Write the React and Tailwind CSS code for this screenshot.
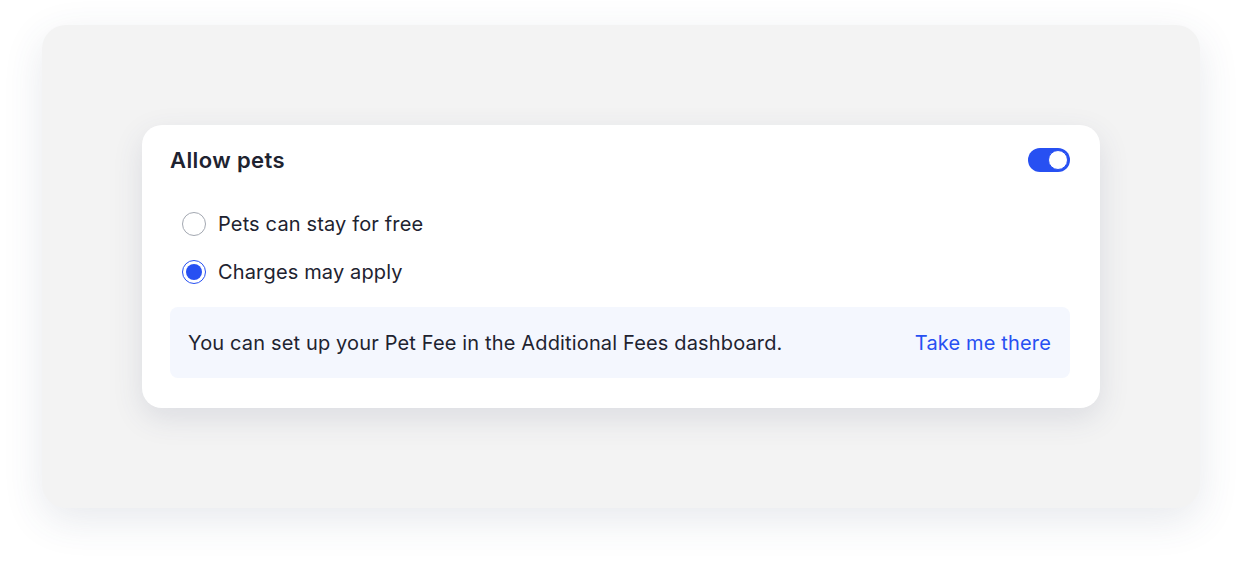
import React, { useState } from "react";

export default function App() {
  const [choice, setChoice] = useState("charges");
  const [on, setOn] = useState(true);
  const font = { fontFamily: "Inter, 'Noto Sans', sans-serif" };
  return (
    <div className="w-[1242px] h-[568px] bg-white pl-[42px] pt-[25px]" style={font}>
      <div className="w-[1158px] h-[483px] rounded-[24px] bg-[#f3f3f3] shadow-[0_12px_40px_rgba(60,70,110,0.12)] pt-[100px] pl-[100px]">
        <div className="w-[958px] h-[283px] rounded-[20px] bg-white shadow-[0_10px_30px_rgba(60,70,110,0.13)] pl-[28px] pr-[30px] pt-[22px]">
          <div className="flex items-center justify-between h-[26px]">
            <h2 className="text-[22px] font-semibold text-[#1e2330] tracking-[0.4px]">Allow pets</h2>
            <button
              onClick={() => setOn(!on)}
              className="w-[42px] h-[24px] rounded-full bg-[#2750f2] flex items-center justify-end px-[2px]"
            >
              <span className="w-[20px] h-[20px] rounded-full bg-white border border-[#2750f2]" />
            </button>
          </div>
          <div className="mt-[39px] flex flex-col gap-[24px] pl-[12px]">
            {[
              ["free", "Pets can stay for free"],
              ["charges", "Charges may apply"],
            ].map(([k, label]) => (
              <label key={k} className="flex items-center gap-[12px] h-[24px] cursor-pointer" onClick={() => setChoice(k)}>
                {choice === k ? (
                  <span className="w-[24px] h-[24px] rounded-full border-[1.5px] border-[#2750f2] flex items-center justify-center">
                    <span className="w-[16px] h-[16px] rounded-full bg-[#2750f2]" />
                  </span>
                ) : (
                  <span className="w-[24px] h-[24px] rounded-full border-[1.5px] border-[#a3a8b1]" />
                )}
                <span className="text-[20px] text-[#1e2330] tracking-[0.15px]">{label}</span>
              </label>
            ))}
          </div>
          <div className="mt-[23px] h-[71px] rounded-[8px] bg-[#f4f7fe] flex items-center justify-between pl-[18px] pr-[19px]">
            <span className="text-[20px] text-[#1e2330] tracking-[0.15px]">You can set up your Pet Fee in the Additional Fees dashboard.</span>
            <a className="text-[20px] text-[#2750f2] tracking-[0.15px] cursor-pointer">Take me there</a>
          </div>
        </div>
      </div>
    </div>
  );
}
